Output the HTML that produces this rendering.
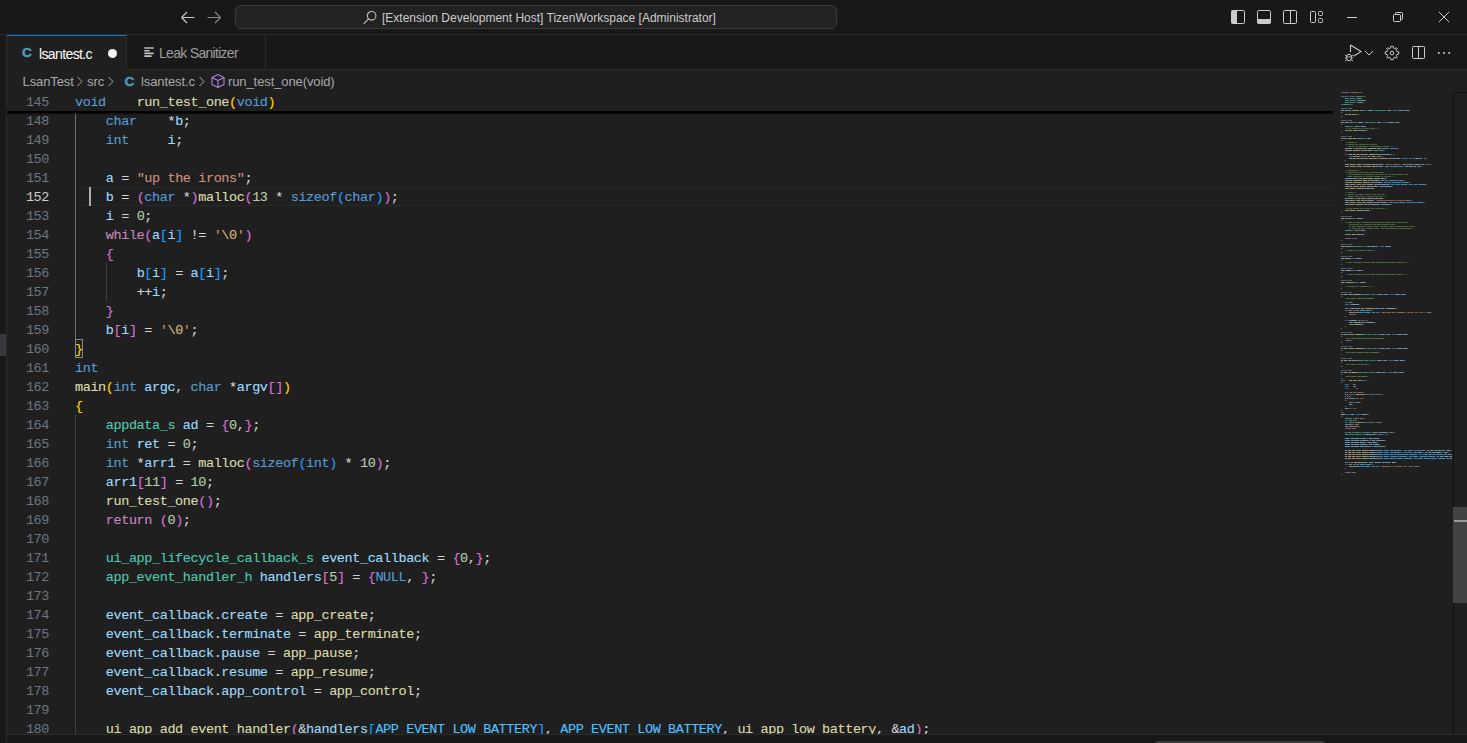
<!DOCTYPE html>
<html><head><meta charset="utf-8">
<style>
*{margin:0;padding:0;box-sizing:border-box}
html,body{width:1467px;height:743px;overflow:hidden;background:#1f1f1f;font-family:"Liberation Sans",sans-serif;position:relative}
.abs{position:absolute}
#title{position:absolute;left:0;top:0;width:1467px;height:35px;background:#181818;border-bottom:1px solid #2b2b2b}
#search{position:absolute;left:235px;top:5px;width:602px;height:24px;background:#222222;border:1px solid #3b3b3b;border-radius:6px}
#search .t{position:absolute;left:146px;top:5px;font-size:12px;color:#cccccc;white-space:pre;letter-spacing:0px}
#lstrip{position:absolute;left:0;top:35px;width:7px;height:708px;background:#181818;border-right:1px solid #2b2b2b}
#tabs{position:absolute;left:7px;top:35px;width:1460px;height:35px;background:#181818;border-bottom:1px solid #2b2b2b}
.tab{position:absolute;top:0;height:35px;border-right:1px solid #2b2b2b;font-size:13px;white-space:pre}
#tab1{left:0;width:120px;background:#1f1f1f;border-top:1px solid #0078d4}
#tab2{left:120px;width:139px;height:34px;background:#181818}
#bc{position:absolute;left:7px;top:70px;width:1460px;height:22px;background:#1f1f1f;font-size:13px;color:#a9a9a9;white-space:pre}
#bc span{position:absolute;top:4px;letter-spacing:-0.1px}
#editor{position:absolute;left:7px;top:92px;width:1460px;height:642px;overflow:hidden;background:#1f1f1f}
.ln{position:absolute;left:0;width:42px;height:19px;margin-top:1px;text-align:right;font-family:"Liberation Mono",monospace;font-size:13.5px;line-height:19px;color:#6e7681;letter-spacing:-0.4px}
.ln.act{color:#cccccc}
.cl{position:absolute;left:68px;height:19px;margin-top:1px;font-family:"Liberation Mono",monospace;font-size:13.5px;line-height:19px;white-space:pre;color:#d4d4d4;letter-spacing:-0.4px;-webkit-text-stroke:0.12px currentColor}
.g{position:absolute;width:1px;background:#404040}
.g.ga{background:#707070}
.sticky{position:absolute;left:0;top:0;width:1326px;height:19px;background:#1f1f1f}
.stsh{position:absolute;left:0;top:19px;width:1326px;height:4px;background:linear-gradient(to bottom,#000 0,#000 40%,rgba(0,0,0,0.35) 70%,rgba(0,0,0,0) 100%)}
.mmwrap{position:absolute;left:1334px;top:92px;width:118px;height:642px;overflow:hidden}
.mm{position:absolute;left:7px;top:0;font-family:"Liberation Mono",monospace;font-size:10px;line-height:12px;white-space:pre;transform:scale(0.16667);transform-origin:0 0;font-weight:bold;-webkit-text-stroke:0.5px currentColor}
.mm i{font-style:normal}
#bottom{position:absolute;left:7px;top:734px;width:1460px;height:9px;background:#181818;border-top:1px solid #2b2b2b}
svg{display:block}
</style></head><body>

<div id="title">
  <svg class="abs" style="left:179px;top:10px" width="18" height="16" viewBox="0 0 18 16"><path d="M2.5 7.5 H15.5 M2.5 7.5 L8 2 M2.5 7.5 L8 13" stroke="#cccccc" stroke-width="1.1" fill="none"/></svg>
  <svg class="abs" style="left:205px;top:10px" width="18" height="16" viewBox="0 0 18 16"><path d="M2.5 7.5 H15.5 M15.5 7.5 L10 2 M15.5 7.5 L10 13" stroke="#8a8a8a" stroke-width="1.1" fill="none"/></svg>
  <div id="search">
    <svg class="abs" style="left:126px;top:4px" width="16" height="16" viewBox="0 0 16 16"><circle cx="9.6" cy="5.8" r="4.3" stroke="#bdbdbd" stroke-width="1.1" fill="none"/><path d="M6.6 8.8 L1.6 13.8" stroke="#bdbdbd" stroke-width="1.2"/></svg>
    <div class="t">[Extension Development Host] TizenWorkspace [Administrator]</div>
  </div>
  <!-- layout icons -->
  <svg class="abs" style="left:1230px;top:9px" width="16" height="16" viewBox="0 0 16 16"><rect x="1.5" y="1.5" width="13" height="13" rx="1.2" stroke="#cccccc" stroke-width="1" fill="none"/><rect x="1.5" y="1.5" width="5.5" height="13" fill="#cccccc"/></svg>
  <svg class="abs" style="left:1256px;top:9px" width="16" height="16" viewBox="0 0 16 16"><rect x="1.5" y="1.5" width="13" height="13" rx="1.2" stroke="#cccccc" stroke-width="1" fill="none"/><rect x="1.5" y="10" width="13" height="4.5" fill="#cccccc"/></svg>
  <svg class="abs" style="left:1282px;top:9px" width="16" height="16" viewBox="0 0 16 16"><rect x="1.5" y="1.5" width="13" height="13" rx="1.2" stroke="#cccccc" stroke-width="1" fill="none"/><path d="M8.5 1.5 V14.5" stroke="#cccccc" stroke-width="1"/></svg>
  <svg class="abs" style="left:1309px;top:9px" width="16" height="16" viewBox="0 0 16 16"><rect x="1.5" y="2.5" width="5" height="11" rx="1" stroke="#cccccc" stroke-width="1" fill="none"/><rect x="9.5" y="2.5" width="4" height="4" rx="1" stroke="#cccccc" stroke-width="1" fill="none"/><rect x="9.5" y="9.5" width="4" height="4" rx="1" stroke="#cccccc" stroke-width="1" fill="none"/></svg>
  <!-- window controls -->
  <div class="abs" style="left:1347px;top:17px;width:10px;height:1px;background:#cccccc"></div>
  <svg class="abs" style="left:1392px;top:11px" width="12" height="12" viewBox="0 0 12 12"><rect x="1.5" y="3.5" width="7" height="7" stroke="#cccccc" stroke-width="1" fill="none" rx="0.8"/><path d="M3.5 3.5 V2.3 Q3.5 1.5 4.3 1.5 H9.7 Q10.5 1.5 10.5 2.3 V7.7 Q10.5 8.5 9.7 8.5 H8.5" stroke="#cccccc" stroke-width="1" fill="none"/></svg>
  <svg class="abs" style="left:1438px;top:11px" width="12" height="12" viewBox="0 0 12 12"><path d="M0.8 0.8 L11.2 11.2 M11.2 0.8 L0.8 11.2" stroke="#cccccc" stroke-width="1" fill="none"/></svg>
</div>

<div id="lstrip"><div class="abs" style="left:0;top:299px;width:6px;height:22px;background:#37373d"></div></div>

<div id="tabs">
  <div class="tab" id="tab1">
    <div class="abs" style="left:15px;top:9px;font-size:13.6px;font-weight:bold;color:#519aba;-webkit-text-stroke:0.5px #519aba">C</div>
    <div class="abs" style="left:32px;top:9.5px;font-size:14px;letter-spacing:-0.62px;color:#ffffff">lsantest.c</div>
    <div class="abs" style="left:101px;top:13px;width:9px;height:9px;border-radius:50%;background:#f4f4f4"></div>
  </div>
  <div class="tab" id="tab2">
    <svg class="abs" style="left:16px;top:11px" width="12" height="12" viewBox="0 0 12 12"><path d="M1.3 2 H10.7 M1.3 4.7 H6.6 M1.3 7.4 H10.7 M1.3 10.1 H8.7" stroke="#c0c0c0" stroke-width="1.6"/></svg>
    <div class="abs" style="left:32px;top:9.8px;font-size:14px;letter-spacing:-0.7px;color:#9d9d9d">Leak Sanitizer</div>
  </div>
  <!-- editor actions -->
  <svg class="abs" style="left:1336px;top:8px" width="24" height="20" viewBox="0 0 24 20"><path d="M7.5 2 L18 8.6 L10.5 13.2" stroke="#cccccc" stroke-width="1.1" fill="none" stroke-linejoin="miter"/><path d="M7.5 2 V9" stroke="#cccccc" stroke-width="1.1"/><ellipse cx="6" cy="14.5" rx="2.6" ry="3.2" stroke="#cccccc" stroke-width="1" fill="none"/><path d="M2 12 L3.6 13 M2 15 H3.4 M2 18 L3.6 17 M10 12 L8.4 13 M10 15 H8.6 M10 18 L8.4 17 M3.5 14 H8.5" stroke="#cccccc" stroke-width="0.9"/></svg>
  <svg class="abs" style="left:1357px;top:14px" width="10" height="8" viewBox="0 0 10 8"><path d="M1 2 L5 6 L9 2" stroke="#cccccc" stroke-width="1" fill="none"/></svg>
  <svg class="abs" style="left:1377px;top:10px" width="16" height="16" viewBox="0 0 16 16"><path d="M8 1.2 L9.2 1.4 L9.5 3.1 L10.8 3.7 L12.3 2.8 L13.2 3.7 L12.3 5.2 L12.9 6.5 L14.6 6.8 L14.8 8 L14.6 9.2 L12.9 9.5 L12.3 10.8 L13.2 12.3 L12.3 13.2 L10.8 12.3 L9.5 12.9 L9.2 14.6 L8 14.8 L6.8 14.6 L6.5 12.9 L5.2 12.3 L3.7 13.2 L2.8 12.3 L3.7 10.8 L3.1 9.5 L1.4 9.2 L1.2 8 L1.4 6.8 L3.1 6.5 L3.7 5.2 L2.8 3.7 L3.7 2.8 L5.2 3.7 L6.5 3.1 L6.8 1.4 Z" stroke="#cccccc" stroke-width="1" fill="none"/><circle cx="8" cy="8" r="1.8" stroke="#cccccc" stroke-width="1" fill="none"/></svg>
  <svg class="abs" style="left:1404px;top:10px" width="16" height="16" viewBox="0 0 16 16"><rect x="1.5" y="1.5" width="12" height="12" rx="0.8" stroke="#cccccc" stroke-width="1" fill="none"/><path d="M7.5 1.5 V14" stroke="#cccccc" stroke-width="1"/></svg>
  <svg class="abs" style="left:1429px;top:10px" width="16" height="16" viewBox="0 0 16 16"><circle cx="2.8" cy="8" r="1" fill="#cccccc"/><circle cx="8" cy="8" r="1" fill="#cccccc"/><circle cx="13.2" cy="8" r="1" fill="#cccccc"/></svg>
</div>

<div id="bc">
  <span style="left:15.5px">LsanTest</span>
  <svg class="abs" style="left:68.5px;top:6px" width="8" height="12" viewBox="0 0 8 12"><path d="M1.5 1 L6 5.5 L1.5 10" stroke="#a9a9a9" stroke-width="1" fill="none"/></svg>
  <span style="left:80px">src</span>
  <svg class="abs" style="left:100px;top:6px" width="8" height="12" viewBox="0 0 8 12"><path d="M1.5 1 L6 5.5 L1.5 10" stroke="#a9a9a9" stroke-width="1" fill="none"/></svg>
  <span style="left:117.5px;top:3.5px;font-size:13.6px;font-weight:bold;color:#519aba;-webkit-text-stroke:0.5px #519aba">C</span>
  <span style="left:134px">lsantest.c</span>
  <svg class="abs" style="left:191px;top:6px" width="8" height="12" viewBox="0 0 8 12"><path d="M1.5 1 L6 5.5 L1.5 10" stroke="#a9a9a9" stroke-width="1" fill="none"/></svg>
  <svg class="abs" style="left:203px;top:3px" width="16" height="16" viewBox="0 0 16 16"><path d="M8 1.5 L14 4.5 V11.5 L8 14.5 L2 11.5 V4.5 Z M2 4.5 L8 7.5 L14 4.5 M8 7.5 V14.5" stroke="#b180d7" stroke-width="1.1" fill="none" stroke-linejoin="round"/></svg>
  <span style="left:221px">run_test_one(void)</span>
</div>

<div id="editor">
  <!-- current line highlight -->
  <div class="abs" style="left:68px;top:95px;width:1259px;height:19px;border-top:1px solid #282828;border-bottom:1px solid #282828"></div>
  <div class="g ga" style="left:68px;top:19px;height:228px"></div><div class="g" style="left:99px;top:171px;height:38px"></div><div class="g" style="left:68px;top:323px;height:323px"></div>
  <!-- cursor -->
  <div class="abs" style="left:82px;top:95px;width:2px;height:19px;background:#aeafad"></div>
  <!-- bracket match box on line 160 -->
  <div class="abs" style="left:68px;top:247px;width:8px;height:19px;border:1px solid #888888;background:rgba(0,100,0,0.1)"></div>
  <div class="ln" style="top:19px">148</div>
<div class="cl" style="top:19px">    <span style="color:#569cd6">char</span>    <span style="color:#d4d4d4">*</span><span style="color:#9cdcfe">b</span><span style="color:#d4d4d4">;</span></div>
<div class="ln" style="top:38px">149</div>
<div class="cl" style="top:38px">    <span style="color:#569cd6">int</span>     <span style="color:#9cdcfe">i</span><span style="color:#d4d4d4">;</span></div>
<div class="ln" style="top:57px">150</div>
<div class="cl" style="top:57px"></div>
<div class="ln" style="top:76px">151</div>
<div class="cl" style="top:76px">    <span style="color:#9cdcfe">a</span><span style="color:#d4d4d4"> = </span><span style="color:#ce9178">"up the irons"</span><span style="color:#d4d4d4">;</span></div>
<div class="ln act" style="top:95px">152</div>
<div class="cl" style="top:95px">    <span style="color:#9cdcfe">b</span><span style="color:#d4d4d4"> = </span><span style="color:#da70d6">(</span><span style="color:#569cd6">char</span><span style="color:#d4d4d4"> *</span><span style="color:#da70d6">)</span><span style="color:#dcdcaa">malloc</span><span style="color:#da70d6">(</span><span style="color:#b5cea8">13</span><span style="color:#d4d4d4"> * </span><span style="color:#569cd6">sizeof</span><span style="color:#179fff">(</span><span style="color:#569cd6">char</span><span style="color:#179fff">)</span><span style="color:#da70d6">)</span><span style="color:#d4d4d4">;</span></div>
<div class="ln" style="top:114px">153</div>
<div class="cl" style="top:114px">    <span style="color:#9cdcfe">i</span><span style="color:#d4d4d4"> = </span><span style="color:#b5cea8">0</span><span style="color:#d4d4d4">;</span></div>
<div class="ln" style="top:133px">154</div>
<div class="cl" style="top:133px">    <span style="color:#c586c0">while</span><span style="color:#da70d6">(</span><span style="color:#9cdcfe">a</span><span style="color:#179fff">[</span><span style="color:#9cdcfe">i</span><span style="color:#179fff">]</span><span style="color:#d4d4d4"> != </span><span style="color:#ce9178">'</span><span style="color:#d7ba7d">\0</span><span style="color:#ce9178">'</span><span style="color:#da70d6">)</span></div>
<div class="ln" style="top:152px">155</div>
<div class="cl" style="top:152px">    <span style="color:#da70d6">{</span></div>
<div class="ln" style="top:171px">156</div>
<div class="cl" style="top:171px">        <span style="color:#9cdcfe">b</span><span style="color:#179fff">[</span><span style="color:#9cdcfe">i</span><span style="color:#179fff">]</span><span style="color:#d4d4d4"> = </span><span style="color:#9cdcfe">a</span><span style="color:#179fff">[</span><span style="color:#9cdcfe">i</span><span style="color:#179fff">]</span><span style="color:#d4d4d4">;</span></div>
<div class="ln" style="top:190px">157</div>
<div class="cl" style="top:190px">        <span style="color:#d4d4d4">++</span><span style="color:#9cdcfe">i</span><span style="color:#d4d4d4">;</span></div>
<div class="ln" style="top:209px">158</div>
<div class="cl" style="top:209px">    <span style="color:#da70d6">}</span></div>
<div class="ln" style="top:228px">159</div>
<div class="cl" style="top:228px">    <span style="color:#9cdcfe">b</span><span style="color:#da70d6">[</span><span style="color:#9cdcfe">i</span><span style="color:#da70d6">]</span><span style="color:#d4d4d4"> = </span><span style="color:#ce9178">'</span><span style="color:#d7ba7d">\0</span><span style="color:#ce9178">'</span><span style="color:#d4d4d4">;</span></div>
<div class="ln" style="top:247px">160</div>
<div class="cl" style="top:247px"><span style="color:#ffd700">}</span></div>
<div class="ln" style="top:266px">161</div>
<div class="cl" style="top:266px"><span style="color:#569cd6">int</span></div>
<div class="ln" style="top:285px">162</div>
<div class="cl" style="top:285px"><span style="color:#dcdcaa">main</span><span style="color:#ffd700">(</span><span style="color:#569cd6">int</span> <span style="color:#9cdcfe">argc</span><span style="color:#d4d4d4">, </span><span style="color:#569cd6">char</span><span style="color:#d4d4d4"> *</span><span style="color:#9cdcfe">argv</span><span style="color:#da70d6">[</span><span style="color:#da70d6">]</span><span style="color:#ffd700">)</span></div>
<div class="ln" style="top:304px">163</div>
<div class="cl" style="top:304px"><span style="color:#ffd700">{</span></div>
<div class="ln" style="top:323px">164</div>
<div class="cl" style="top:323px">    <span style="color:#4ec9b0">appdata_s</span> <span style="color:#9cdcfe">ad</span><span style="color:#d4d4d4"> = </span><span style="color:#da70d6">{</span><span style="color:#b5cea8">0</span><span style="color:#d4d4d4">,</span><span style="color:#da70d6">}</span><span style="color:#d4d4d4">;</span></div>
<div class="ln" style="top:342px">165</div>
<div class="cl" style="top:342px">    <span style="color:#569cd6">int</span> <span style="color:#9cdcfe">ret</span><span style="color:#d4d4d4"> = </span><span style="color:#b5cea8">0</span><span style="color:#d4d4d4">;</span></div>
<div class="ln" style="top:361px">166</div>
<div class="cl" style="top:361px">    <span style="color:#569cd6">int</span><span style="color:#d4d4d4"> *</span><span style="color:#9cdcfe">arr1</span><span style="color:#d4d4d4"> = </span><span style="color:#dcdcaa">malloc</span><span style="color:#da70d6">(</span><span style="color:#569cd6">sizeof</span><span style="color:#179fff">(</span><span style="color:#569cd6">int</span><span style="color:#179fff">)</span><span style="color:#d4d4d4"> * </span><span style="color:#b5cea8">10</span><span style="color:#da70d6">)</span><span style="color:#d4d4d4">;</span></div>
<div class="ln" style="top:380px">167</div>
<div class="cl" style="top:380px">    <span style="color:#9cdcfe">arr1</span><span style="color:#da70d6">[</span><span style="color:#b5cea8">11</span><span style="color:#da70d6">]</span><span style="color:#d4d4d4"> = </span><span style="color:#b5cea8">10</span><span style="color:#d4d4d4">;</span></div>
<div class="ln" style="top:399px">168</div>
<div class="cl" style="top:399px">    <span style="color:#dcdcaa">run_test_one</span><span style="color:#da70d6">(</span><span style="color:#da70d6">)</span><span style="color:#d4d4d4">;</span></div>
<div class="ln" style="top:418px">169</div>
<div class="cl" style="top:418px">    <span style="color:#c586c0">return</span> <span style="color:#da70d6">(</span><span style="color:#b5cea8">0</span><span style="color:#da70d6">)</span><span style="color:#d4d4d4">;</span></div>
<div class="ln" style="top:437px">170</div>
<div class="cl" style="top:437px"></div>
<div class="ln" style="top:456px">171</div>
<div class="cl" style="top:456px">    <span style="color:#4ec9b0">ui_app_lifecycle_callback_s</span> <span style="color:#9cdcfe">event_callback</span><span style="color:#d4d4d4"> = </span><span style="color:#da70d6">{</span><span style="color:#b5cea8">0</span><span style="color:#d4d4d4">,</span><span style="color:#da70d6">}</span><span style="color:#d4d4d4">;</span></div>
<div class="ln" style="top:475px">172</div>
<div class="cl" style="top:475px">    <span style="color:#4ec9b0">app_event_handler_h</span> <span style="color:#9cdcfe">handlers</span><span style="color:#da70d6">[</span><span style="color:#b5cea8">5</span><span style="color:#da70d6">]</span><span style="color:#d4d4d4"> = </span><span style="color:#da70d6">{</span><span style="color:#569cd6">NULL</span><span style="color:#d4d4d4">, </span><span style="color:#da70d6">}</span><span style="color:#d4d4d4">;</span></div>
<div class="ln" style="top:494px">173</div>
<div class="cl" style="top:494px"></div>
<div class="ln" style="top:513px">174</div>
<div class="cl" style="top:513px">    <span style="color:#9cdcfe">event_callback</span><span style="color:#d4d4d4">.</span><span style="color:#9cdcfe">create</span><span style="color:#d4d4d4"> = </span><span style="color:#dcdcaa">app_create</span><span style="color:#d4d4d4">;</span></div>
<div class="ln" style="top:532px">175</div>
<div class="cl" style="top:532px">    <span style="color:#9cdcfe">event_callback</span><span style="color:#d4d4d4">.</span><span style="color:#9cdcfe">terminate</span><span style="color:#d4d4d4"> = </span><span style="color:#dcdcaa">app_terminate</span><span style="color:#d4d4d4">;</span></div>
<div class="ln" style="top:551px">176</div>
<div class="cl" style="top:551px">    <span style="color:#9cdcfe">event_callback</span><span style="color:#d4d4d4">.</span><span style="color:#9cdcfe">pause</span><span style="color:#d4d4d4"> = </span><span style="color:#dcdcaa">app_pause</span><span style="color:#d4d4d4">;</span></div>
<div class="ln" style="top:570px">177</div>
<div class="cl" style="top:570px">    <span style="color:#9cdcfe">event_callback</span><span style="color:#d4d4d4">.</span><span style="color:#9cdcfe">resume</span><span style="color:#d4d4d4"> = </span><span style="color:#dcdcaa">app_resume</span><span style="color:#d4d4d4">;</span></div>
<div class="ln" style="top:589px">178</div>
<div class="cl" style="top:589px">    <span style="color:#9cdcfe">event_callback</span><span style="color:#d4d4d4">.</span><span style="color:#9cdcfe">app_control</span><span style="color:#d4d4d4"> = </span><span style="color:#dcdcaa">app_control</span><span style="color:#d4d4d4">;</span></div>
<div class="ln" style="top:608px">179</div>
<div class="cl" style="top:608px"></div>
<div class="ln" style="top:627px">180</div>
<div class="cl" style="top:627px">    <span style="color:#dcdcaa">ui_app_add_event_handler</span><span style="color:#da70d6">(</span><span style="color:#d4d4d4">&amp;</span><span style="color:#9cdcfe">handlers</span><span style="color:#179fff">[</span><span style="color:#4fc1ff">APP_EVENT_LOW_BATTERY</span><span style="color:#179fff">]</span><span style="color:#d4d4d4">, </span><span style="color:#4fc1ff">APP_EVENT_LOW_BATTERY</span><span style="color:#d4d4d4">, </span><span style="color:#dcdcaa">ui_app_low_battery</span><span style="color:#d4d4d4">, </span><span style="color:#d4d4d4">&amp;</span><span style="color:#9cdcfe">ad</span><span style="color:#da70d6">)</span><span style="color:#d4d4d4">;</span></div>
  <div class="stsh"></div><div class="sticky"><div class="ln" style="top:0">145</div><div class="cl" style="top:0"><span style="color:#569cd6">void</span>    <span style="color:#dcdcaa">run_test_one</span><span style="color:#ffd700">(</span><span style="color:#569cd6">void</span><span style="color:#ffd700">)</span></div></div>
</div>
<div class="mmwrap"><div class="mm"><i style="color:#c586c0">#include</i> <i style="color:#ce9178">"lsantest.h"</i>

<i style="color:#569cd6">typedef</i> <i style="color:#569cd6">struct</i> <i style="color:#4ec9b0">appdata</i> <i style="color:#d4d4d4">{</i>
    <i style="color:#4ec9b0">Evas_Object</i> <i style="color:#d4d4d4">*</i><i style="color:#9cdcfe">win</i><i style="color:#d4d4d4">;</i>
    <i style="color:#4ec9b0">Evas_Object</i> <i style="color:#d4d4d4">*</i><i style="color:#9cdcfe">conform</i><i style="color:#d4d4d4">;</i>
    <i style="color:#4ec9b0">Evas_Object</i> <i style="color:#d4d4d4">*</i><i style="color:#9cdcfe">label</i><i style="color:#d4d4d4">;</i>
<i style="color:#d4d4d4">}</i> <i style="color:#4ec9b0">appdata_s</i><i style="color:#d4d4d4">;</i>

<i style="color:#569cd6">static</i> <i style="color:#569cd6">void</i>
<i style="color:#dcdcaa">win_delete_request_cb</i><i style="color:#d4d4d4">(</i><i style="color:#569cd6">void</i> <i style="color:#d4d4d4">*</i><i style="color:#9cdcfe">data</i><i style="color:#d4d4d4">,</i> <i style="color:#4ec9b0">Evas_Object</i> <i style="color:#d4d4d4">*</i><i style="color:#9cdcfe">obj</i><i style="color:#d4d4d4">,</i> <i style="color:#569cd6">void</i> <i style="color:#d4d4d4">*</i><i style="color:#9cdcfe">event_info</i><i style="color:#d4d4d4">)</i>
<i style="color:#d4d4d4">{</i>
    <i style="color:#dcdcaa">ui_app_exit</i><i style="color:#d4d4d4">(</i><i style="color:#d4d4d4">)</i><i style="color:#d4d4d4">;</i>
<i style="color:#d4d4d4">}</i>

<i style="color:#569cd6">static</i> <i style="color:#569cd6">void</i>
<i style="color:#dcdcaa">win_back_cb</i><i style="color:#d4d4d4">(</i><i style="color:#569cd6">void</i> <i style="color:#d4d4d4">*</i><i style="color:#9cdcfe">data</i><i style="color:#d4d4d4">,</i> <i style="color:#4ec9b0">Evas_Object</i> <i style="color:#d4d4d4">*</i><i style="color:#9cdcfe">obj</i><i style="color:#d4d4d4">,</i> <i style="color:#569cd6">void</i> <i style="color:#d4d4d4">*</i><i style="color:#9cdcfe">event_info</i><i style="color:#d4d4d4">)</i>
<i style="color:#d4d4d4">{</i>
    <i style="color:#4ec9b0">appdata_s</i> <i style="color:#d4d4d4">*</i><i style="color:#9cdcfe">ad</i> <i style="color:#d4d4d4">=</i> <i style="color:#9cdcfe">data</i><i style="color:#d4d4d4">;</i>
    <i style="color:#6a9955">/* Let window go to hide state. */</i>
    <i style="color:#dcdcaa">elm_win_lower</i><i style="color:#d4d4d4">(</i><i style="color:#9cdcfe">ad</i><i style="color:#d4d4d4">-</i><i style="color:#d4d4d4">&gt;</i><i style="color:#9cdcfe">win</i><i style="color:#d4d4d4">)</i><i style="color:#d4d4d4">;</i>
<i style="color:#d4d4d4">}</i>

<i style="color:#569cd6">static</i> <i style="color:#569cd6">void</i>
<i style="color:#dcdcaa">create_base_gui</i><i style="color:#d4d4d4">(</i><i style="color:#4ec9b0">appdata_s</i> <i style="color:#d4d4d4">*</i><i style="color:#9cdcfe">ad</i><i style="color:#d4d4d4">)</i>
<i style="color:#d4d4d4">{</i>
    <i style="color:#6a9955">/* Window */</i>
    <i style="color:#6a9955">/* Create and initialize elm_win.</i>
       <i style="color:#6a9955">elm_win is mandatory to manipulate window. */</i>
    <i style="color:#9cdcfe">ad</i><i style="color:#d4d4d4">-</i><i style="color:#d4d4d4">&gt;</i><i style="color:#9cdcfe">win</i> <i style="color:#d4d4d4">=</i> <i style="color:#dcdcaa">elm_win_util_standard_add</i><i style="color:#d4d4d4">(</i><i style="color:#4fc1ff">PACKAGE</i><i style="color:#d4d4d4">,</i> <i style="color:#4fc1ff">PACKAGE</i><i style="color:#d4d4d4">)</i><i style="color:#d4d4d4">;</i>
    <i style="color:#dcdcaa">elm_win_autodel_set</i><i style="color:#d4d4d4">(</i><i style="color:#9cdcfe">ad</i><i style="color:#d4d4d4">-</i><i style="color:#d4d4d4">&gt;</i><i style="color:#9cdcfe">win</i><i style="color:#d4d4d4">,</i> <i style="color:#4fc1ff">EINA_TRUE</i><i style="color:#d4d4d4">)</i><i style="color:#d4d4d4">;</i>

    <i style="color:#c586c0">if</i> <i style="color:#d4d4d4">(</i><i style="color:#dcdcaa">elm_win_wm_rotation_supported_get</i><i style="color:#d4d4d4">(</i><i style="color:#9cdcfe">ad</i><i style="color:#d4d4d4">-</i><i style="color:#d4d4d4">&gt;</i><i style="color:#9cdcfe">win</i><i style="color:#d4d4d4">)</i><i style="color:#d4d4d4">)</i> <i style="color:#d4d4d4">{</i>
        <i style="color:#569cd6">int</i> <i style="color:#9cdcfe">rots</i><i style="color:#d4d4d4">[</i><i style="color:#b5cea8">4</i><i style="color:#d4d4d4">]</i> <i style="color:#d4d4d4">=</i> <i style="color:#d4d4d4">{</i> <i style="color:#b5cea8">0</i><i style="color:#d4d4d4">,</i> <i style="color:#b5cea8">90</i><i style="color:#d4d4d4">,</i> <i style="color:#b5cea8">180</i><i style="color:#d4d4d4">,</i> <i style="color:#b5cea8">270</i> <i style="color:#d4d4d4">}</i><i style="color:#d4d4d4">;</i>
        <i style="color:#dcdcaa">elm_win_wm_rotation_available_rotations_set</i><i style="color:#d4d4d4">(</i><i style="color:#9cdcfe">ad</i><i style="color:#d4d4d4">-</i><i style="color:#d4d4d4">&gt;</i><i style="color:#9cdcfe">win</i><i style="color:#d4d4d4">,</i> <i style="color:#d4d4d4">(</i><i style="color:#569cd6">const</i> <i style="color:#569cd6">int</i> <i style="color:#d4d4d4">*</i><i style="color:#d4d4d4">)</i><i style="color:#d4d4d4">(</i><i style="color:#d4d4d4">&amp;</i><i style="color:#9cdcfe">rots</i><i style="color:#d4d4d4">)</i><i style="color:#d4d4d4">,</i> <i style="color:#b5cea8">4</i><i style="color:#d4d4d4">)</i><i style="color:#d4d4d4">;</i>
    <i style="color:#d4d4d4">}</i>

    <i style="color:#dcdcaa">evas_object_smart_callback_add</i><i style="color:#d4d4d4">(</i><i style="color:#9cdcfe">ad</i><i style="color:#d4d4d4">-</i><i style="color:#d4d4d4">&gt;</i><i style="color:#9cdcfe">win</i><i style="color:#d4d4d4">,</i> <i style="color:#ce9178">"delete,request"</i><i style="color:#d4d4d4">,</i> <i style="color:#9cdcfe">win_delete_request_cb</i><i style="color:#d4d4d4">,</i> <i style="color:#569cd6">NULL</i><i style="color:#d4d4d4">)</i><i style="color:#d4d4d4">;</i>
    <i style="color:#dcdcaa">eext_object_event_callback_add</i><i style="color:#d4d4d4">(</i><i style="color:#9cdcfe">ad</i><i style="color:#d4d4d4">-</i><i style="color:#d4d4d4">&gt;</i><i style="color:#9cdcfe">win</i><i style="color:#d4d4d4">,</i> <i style="color:#4fc1ff">EEXT_CALLBACK_BACK</i><i style="color:#d4d4d4">,</i> <i style="color:#9cdcfe">win_back_cb</i><i style="color:#d4d4d4">,</i> <i style="color:#9cdcfe">ad</i><i style="color:#d4d4d4">)</i><i style="color:#d4d4d4">;</i>

    <i style="color:#6a9955">/* Conformant */</i>
    <i style="color:#6a9955">/* Create and initialize elm_conformant.</i>
       <i style="color:#6a9955">elm_conformant is mandatory for base gui to have proper size</i>
       <i style="color:#6a9955">when indicator or virtual keypad is visible. */</i>
    <i style="color:#9cdcfe">ad</i><i style="color:#d4d4d4">-</i><i style="color:#d4d4d4">&gt;</i><i style="color:#9cdcfe">conform</i> <i style="color:#d4d4d4">=</i> <i style="color:#dcdcaa">elm_conformant_add</i><i style="color:#d4d4d4">(</i><i style="color:#9cdcfe">ad</i><i style="color:#d4d4d4">-</i><i style="color:#d4d4d4">&gt;</i><i style="color:#9cdcfe">win</i><i style="color:#d4d4d4">)</i><i style="color:#d4d4d4">;</i>
    <i style="color:#dcdcaa">elm_win_indicator_mode_set</i><i style="color:#d4d4d4">(</i><i style="color:#9cdcfe">ad</i><i style="color:#d4d4d4">-</i><i style="color:#d4d4d4">&gt;</i><i style="color:#9cdcfe">win</i><i style="color:#d4d4d4">,</i> <i style="color:#4fc1ff">ELM_WIN_INDICATOR_SHOW</i><i style="color:#d4d4d4">)</i><i style="color:#d4d4d4">;</i>
    <i style="color:#dcdcaa">elm_win_indicator_opacity_set</i><i style="color:#d4d4d4">(</i><i style="color:#9cdcfe">ad</i><i style="color:#d4d4d4">-</i><i style="color:#d4d4d4">&gt;</i><i style="color:#9cdcfe">win</i><i style="color:#d4d4d4">,</i> <i style="color:#4fc1ff">ELM_WIN_INDICATOR_OPAQUE</i><i style="color:#d4d4d4">)</i><i style="color:#d4d4d4">;</i>
    <i style="color:#dcdcaa">evas_object_size_hint_weight_set</i><i style="color:#d4d4d4">(</i><i style="color:#9cdcfe">ad</i><i style="color:#d4d4d4">-</i><i style="color:#d4d4d4">&gt;</i><i style="color:#9cdcfe">conform</i><i style="color:#d4d4d4">,</i> <i style="color:#4fc1ff">EVAS_HINT_EXPAND</i><i style="color:#d4d4d4">,</i> <i style="color:#4fc1ff">EVAS_HINT_EXPAND</i><i style="color:#d4d4d4">)</i><i style="color:#d4d4d4">;</i>
    <i style="color:#dcdcaa">elm_win_resize_object_add</i><i style="color:#d4d4d4">(</i><i style="color:#9cdcfe">ad</i><i style="color:#d4d4d4">-</i><i style="color:#d4d4d4">&gt;</i><i style="color:#9cdcfe">win</i><i style="color:#d4d4d4">,</i> <i style="color:#9cdcfe">ad</i><i style="color:#d4d4d4">-</i><i style="color:#d4d4d4">&gt;</i><i style="color:#9cdcfe">conform</i><i style="color:#d4d4d4">)</i><i style="color:#d4d4d4">;</i>
    <i style="color:#dcdcaa">evas_object_show</i><i style="color:#d4d4d4">(</i><i style="color:#9cdcfe">ad</i><i style="color:#d4d4d4">-</i><i style="color:#d4d4d4">&gt;</i><i style="color:#9cdcfe">conform</i><i style="color:#d4d4d4">)</i><i style="color:#d4d4d4">;</i>

    <i style="color:#6a9955">/* Label */</i>
    <i style="color:#6a9955">/* Create an actual view of the base gui.</i>
       <i style="color:#6a9955">Modify this part to change the view. */</i>
    <i style="color:#9cdcfe">ad</i><i style="color:#d4d4d4">-</i><i style="color:#d4d4d4">&gt;</i><i style="color:#9cdcfe">label</i> <i style="color:#d4d4d4">=</i> <i style="color:#dcdcaa">elm_label_add</i><i style="color:#d4d4d4">(</i><i style="color:#9cdcfe">ad</i><i style="color:#d4d4d4">-</i><i style="color:#d4d4d4">&gt;</i><i style="color:#9cdcfe">conform</i><i style="color:#d4d4d4">)</i><i style="color:#d4d4d4">;</i>
    <i style="color:#dcdcaa">elm_object_text_set</i><i style="color:#d4d4d4">(</i><i style="color:#9cdcfe">ad</i><i style="color:#d4d4d4">-</i><i style="color:#d4d4d4">&gt;</i><i style="color:#9cdcfe">label</i><i style="color:#d4d4d4">,</i> <i style="color:#ce9178">"&lt;align=center&gt;Hello Tizen&lt;/align&gt;"</i><i style="color:#d4d4d4">)</i><i style="color:#d4d4d4">;</i>
    <i style="color:#dcdcaa">evas_object_size_hint_weight_set</i><i style="color:#d4d4d4">(</i><i style="color:#9cdcfe">ad</i><i style="color:#d4d4d4">-</i><i style="color:#d4d4d4">&gt;</i><i style="color:#9cdcfe">label</i><i style="color:#d4d4d4">,</i> <i style="color:#4fc1ff">EVAS_HINT_EXPAND</i><i style="color:#d4d4d4">,</i> <i style="color:#4fc1ff">EVAS_HINT_EXPAND</i><i style="color:#d4d4d4">)</i><i style="color:#d4d4d4">;</i>
    <i style="color:#dcdcaa">elm_object_content_set</i><i style="color:#d4d4d4">(</i><i style="color:#9cdcfe">ad</i><i style="color:#d4d4d4">-</i><i style="color:#d4d4d4">&gt;</i><i style="color:#9cdcfe">conform</i><i style="color:#d4d4d4">,</i> <i style="color:#9cdcfe">ad</i><i style="color:#d4d4d4">-</i><i style="color:#d4d4d4">&gt;</i><i style="color:#9cdcfe">label</i><i style="color:#d4d4d4">)</i><i style="color:#d4d4d4">;</i>

    <i style="color:#6a9955">/* Show window after base gui is set up */</i>
    <i style="color:#dcdcaa">evas_object_show</i><i style="color:#d4d4d4">(</i><i style="color:#9cdcfe">ad</i><i style="color:#d4d4d4">-</i><i style="color:#d4d4d4">&gt;</i><i style="color:#9cdcfe">win</i><i style="color:#d4d4d4">)</i><i style="color:#d4d4d4">;</i>
<i style="color:#d4d4d4">}</i>

<i style="color:#569cd6">static</i> <i style="color:#569cd6">bool</i>
<i style="color:#dcdcaa">app_create</i><i style="color:#d4d4d4">(</i><i style="color:#569cd6">void</i> <i style="color:#d4d4d4">*</i><i style="color:#9cdcfe">data</i><i style="color:#d4d4d4">)</i>
<i style="color:#d4d4d4">{</i>
    <i style="color:#6a9955">/* Hook to take necessary actions before main event loop starts</i>
        <i style="color:#6a9955">Initialize UI resources and application's data</i>
        <i style="color:#6a9955">If this function returns true, the main loop of application starts</i>
        <i style="color:#6a9955">If this function returns false, the application is terminated */</i>
    <i style="color:#4ec9b0">appdata_s</i> <i style="color:#d4d4d4">*</i><i style="color:#9cdcfe">ad</i> <i style="color:#d4d4d4">=</i> <i style="color:#9cdcfe">data</i><i style="color:#d4d4d4">;</i>

    <i style="color:#dcdcaa">create_base_gui</i><i style="color:#d4d4d4">(</i><i style="color:#9cdcfe">ad</i><i style="color:#d4d4d4">)</i><i style="color:#d4d4d4">;</i>

    <i style="color:#c586c0">return</i> <i style="color:#569cd6">true</i><i style="color:#d4d4d4">;</i>
<i style="color:#d4d4d4">}</i>

<i style="color:#569cd6">static</i> <i style="color:#569cd6">void</i>
<i style="color:#dcdcaa">app_control</i><i style="color:#d4d4d4">(</i><i style="color:#4ec9b0">app_control_h</i> <i style="color:#9cdcfe">app_control</i><i style="color:#d4d4d4">,</i> <i style="color:#569cd6">void</i> <i style="color:#d4d4d4">*</i><i style="color:#9cdcfe">data</i><i style="color:#d4d4d4">)</i>
<i style="color:#d4d4d4">{</i>
    <i style="color:#6a9955">/* Handle the launch request. */</i>
<i style="color:#d4d4d4">}</i>

<i style="color:#569cd6">static</i> <i style="color:#569cd6">void</i>
<i style="color:#dcdcaa">app_pause</i><i style="color:#d4d4d4">(</i><i style="color:#569cd6">void</i> <i style="color:#d4d4d4">*</i><i style="color:#9cdcfe">data</i><i style="color:#d4d4d4">)</i>
<i style="color:#d4d4d4">{</i>
    <i style="color:#6a9955">/* Take necessary actions when application becomes invisible. */</i>
<i style="color:#d4d4d4">}</i>

<i style="color:#569cd6">static</i> <i style="color:#569cd6">void</i>
<i style="color:#dcdcaa">app_resume</i><i style="color:#d4d4d4">(</i><i style="color:#569cd6">void</i> <i style="color:#d4d4d4">*</i><i style="color:#9cdcfe">data</i><i style="color:#d4d4d4">)</i>
<i style="color:#d4d4d4">{</i>
    <i style="color:#6a9955">/* Take necessary actions when application becomes visible. */</i>
<i style="color:#d4d4d4">}</i>

<i style="color:#569cd6">static</i> <i style="color:#569cd6">void</i>
<i style="color:#dcdcaa">app_terminate</i><i style="color:#d4d4d4">(</i><i style="color:#569cd6">void</i> <i style="color:#d4d4d4">*</i><i style="color:#9cdcfe">data</i><i style="color:#d4d4d4">)</i>
<i style="color:#d4d4d4">{</i>
    <i style="color:#6a9955">/* Release all resources. */</i>
<i style="color:#d4d4d4">}</i>

<i style="color:#569cd6">static</i> <i style="color:#569cd6">void</i>
<i style="color:#dcdcaa">ui_app_lang_changed</i><i style="color:#d4d4d4">(</i><i style="color:#4ec9b0">app_event_info_h</i> <i style="color:#9cdcfe">event_info</i><i style="color:#d4d4d4">,</i> <i style="color:#569cd6">void</i> <i style="color:#d4d4d4">*</i><i style="color:#9cdcfe">user_data</i><i style="color:#d4d4d4">)</i>
<i style="color:#d4d4d4">{</i>
    <i style="color:#6a9955">/*APP_EVENT_LANGUAGE_CHANGED*/</i>

    <i style="color:#569cd6">int</i> <i style="color:#9cdcfe">ret</i><i style="color:#d4d4d4">;</i>
    <i style="color:#569cd6">char</i> <i style="color:#d4d4d4">*</i><i style="color:#9cdcfe">language</i><i style="color:#d4d4d4">;</i>

    <i style="color:#9cdcfe">ret</i> <i style="color:#d4d4d4">=</i> <i style="color:#dcdcaa">app_event_get_language</i><i style="color:#d4d4d4">(</i><i style="color:#9cdcfe">event_info</i><i style="color:#d4d4d4">,</i> <i style="color:#d4d4d4">&amp;</i><i style="color:#9cdcfe">language</i><i style="color:#d4d4d4">)</i><i style="color:#d4d4d4">;</i>
    <i style="color:#c586c0">if</i> <i style="color:#d4d4d4">(</i><i style="color:#9cdcfe">ret</i> <i style="color:#d4d4d4">!</i><i style="color:#d4d4d4">=</i> <i style="color:#4fc1ff">APP_ERROR_NONE</i><i style="color:#d4d4d4">)</i> <i style="color:#d4d4d4">{</i>
        <i style="color:#dcdcaa">dlog_print</i><i style="color:#d4d4d4">(</i><i style="color:#4fc1ff">DLOG_ERROR</i><i style="color:#d4d4d4">,</i> <i style="color:#4fc1ff">LOG_TAG</i><i style="color:#d4d4d4">,</i> <i style="color:#ce9178">"app_event_get_language() failed. Err = %d."</i><i style="color:#d4d4d4">,</i> <i style="color:#9cdcfe">ret</i><i style="color:#d4d4d4">)</i><i style="color:#d4d4d4">;</i>
        <i style="color:#c586c0">return</i><i style="color:#d4d4d4">;</i>
    <i style="color:#d4d4d4">}</i>

    <i style="color:#c586c0">if</i> <i style="color:#d4d4d4">(</i><i style="color:#9cdcfe">language</i> <i style="color:#d4d4d4">!</i><i style="color:#d4d4d4">=</i> <i style="color:#569cd6">NULL</i><i style="color:#d4d4d4">)</i> <i style="color:#d4d4d4">{</i>
        <i style="color:#dcdcaa">elm_language_set</i><i style="color:#d4d4d4">(</i><i style="color:#9cdcfe">language</i><i style="color:#d4d4d4">)</i><i style="color:#d4d4d4">;</i>
        <i style="color:#dcdcaa">free</i><i style="color:#d4d4d4">(</i><i style="color:#9cdcfe">language</i><i style="color:#d4d4d4">)</i><i style="color:#d4d4d4">;</i>
    <i style="color:#d4d4d4">}</i>
<i style="color:#d4d4d4">}</i>

<i style="color:#569cd6">static</i> <i style="color:#569cd6">void</i>
<i style="color:#dcdcaa">ui_app_orient_changed</i><i style="color:#d4d4d4">(</i><i style="color:#4ec9b0">app_event_info_h</i> <i style="color:#9cdcfe">event_info</i><i style="color:#d4d4d4">,</i> <i style="color:#569cd6">void</i> <i style="color:#d4d4d4">*</i><i style="color:#9cdcfe">user_data</i><i style="color:#d4d4d4">)</i>
<i style="color:#d4d4d4">{</i>
    <i style="color:#6a9955">/*APP_EVENT_DEVICE_ORIENTATION_CHANGED*/</i>
    <i style="color:#c586c0">return</i><i style="color:#d4d4d4">;</i>
<i style="color:#d4d4d4">}</i>

<i style="color:#569cd6">static</i> <i style="color:#569cd6">void</i>
<i style="color:#dcdcaa">ui_app_region_changed</i><i style="color:#d4d4d4">(</i><i style="color:#4ec9b0">app_event_info_h</i> <i style="color:#9cdcfe">event_info</i><i style="color:#d4d4d4">,</i> <i style="color:#569cd6">void</i> <i style="color:#d4d4d4">*</i><i style="color:#9cdcfe">user_data</i><i style="color:#d4d4d4">)</i>
<i style="color:#d4d4d4">{</i>
    <i style="color:#6a9955">/*APP_EVENT_REGION_FORMAT_CHANGED*/</i>
<i style="color:#d4d4d4">}</i>

<i style="color:#569cd6">static</i> <i style="color:#569cd6">void</i>
<i style="color:#dcdcaa">ui_app_low_battery</i><i style="color:#d4d4d4">(</i><i style="color:#4ec9b0">app_event_info_h</i> <i style="color:#9cdcfe">event_info</i><i style="color:#d4d4d4">,</i> <i style="color:#569cd6">void</i> <i style="color:#d4d4d4">*</i><i style="color:#9cdcfe">user_data</i><i style="color:#d4d4d4">)</i>
<i style="color:#d4d4d4">{</i>
    <i style="color:#6a9955">/*APP_EVENT_LOW_BATTERY*/</i>
<i style="color:#d4d4d4">}</i>

<i style="color:#569cd6">static</i> <i style="color:#569cd6">void</i>
<i style="color:#dcdcaa">ui_app_low_memory</i><i style="color:#d4d4d4">(</i><i style="color:#4ec9b0">app_event_info_h</i> <i style="color:#9cdcfe">event_info</i><i style="color:#d4d4d4">,</i> <i style="color:#569cd6">void</i> <i style="color:#d4d4d4">*</i><i style="color:#9cdcfe">user_data</i><i style="color:#d4d4d4">)</i>
<i style="color:#d4d4d4">{</i>
    <i style="color:#6a9955">/*APP_EVENT_LOW_MEMORY*/</i>
<i style="color:#d4d4d4">}</i>
<i style="color:#569cd6">void</i>    <i style="color:#dcdcaa">run_test_one</i><i style="color:#d4d4d4">(</i><i style="color:#569cd6">void</i><i style="color:#d4d4d4">)</i>
<i style="color:#d4d4d4">{</i>
    <i style="color:#569cd6">char</i>    <i style="color:#d4d4d4">*</i><i style="color:#9cdcfe">a</i><i style="color:#d4d4d4">;</i>
    <i style="color:#569cd6">char</i>    <i style="color:#d4d4d4">*</i><i style="color:#9cdcfe">b</i><i style="color:#d4d4d4">;</i>
    <i style="color:#569cd6">int</i>        <i style="color:#9cdcfe">i</i><i style="color:#d4d4d4">;</i>

    <i style="color:#9cdcfe">a</i> <i style="color:#d4d4d4">=</i> <i style="color:#ce9178">"up the irons"</i><i style="color:#d4d4d4">;</i>
    <i style="color:#9cdcfe">b</i> <i style="color:#d4d4d4">=</i> <i style="color:#d4d4d4">(</i><i style="color:#569cd6">char</i> <i style="color:#d4d4d4">*</i><i style="color:#d4d4d4">)</i><i style="color:#dcdcaa">malloc</i><i style="color:#d4d4d4">(</i><i style="color:#b5cea8">13</i> <i style="color:#d4d4d4">*</i> <i style="color:#569cd6">sizeof</i><i style="color:#d4d4d4">(</i><i style="color:#569cd6">char</i><i style="color:#d4d4d4">)</i><i style="color:#d4d4d4">)</i><i style="color:#d4d4d4">;</i>
    <i style="color:#9cdcfe">i</i> <i style="color:#d4d4d4">=</i> <i style="color:#b5cea8">0</i><i style="color:#d4d4d4">;</i>
    <i style="color:#c586c0">while</i><i style="color:#d4d4d4">(</i><i style="color:#9cdcfe">a</i><i style="color:#d4d4d4">[</i><i style="color:#9cdcfe">i</i><i style="color:#d4d4d4">]</i> <i style="color:#d4d4d4">!</i><i style="color:#d4d4d4">=</i> <i style="color:#ce9178">'\0'</i><i style="color:#d4d4d4">)</i>
    <i style="color:#d4d4d4">{</i>
        <i style="color:#9cdcfe">b</i><i style="color:#d4d4d4">[</i><i style="color:#9cdcfe">i</i><i style="color:#d4d4d4">]</i> <i style="color:#d4d4d4">=</i> <i style="color:#9cdcfe">a</i><i style="color:#d4d4d4">[</i><i style="color:#9cdcfe">i</i><i style="color:#d4d4d4">]</i><i style="color:#d4d4d4">;</i>
        <i style="color:#d4d4d4">+</i><i style="color:#d4d4d4">+</i><i style="color:#9cdcfe">i</i><i style="color:#d4d4d4">;</i>
    <i style="color:#d4d4d4">}</i>
    <i style="color:#9cdcfe">b</i><i style="color:#d4d4d4">[</i><i style="color:#9cdcfe">i</i><i style="color:#d4d4d4">]</i> <i style="color:#d4d4d4">=</i> <i style="color:#ce9178">'\0'</i><i style="color:#d4d4d4">;</i>
<i style="color:#d4d4d4">}</i>
<i style="color:#569cd6">int</i>
<i style="color:#dcdcaa">main</i><i style="color:#d4d4d4">(</i><i style="color:#569cd6">int</i> <i style="color:#9cdcfe">argc</i><i style="color:#d4d4d4">,</i> <i style="color:#569cd6">char</i> <i style="color:#d4d4d4">*</i><i style="color:#9cdcfe">argv</i><i style="color:#d4d4d4">[</i><i style="color:#d4d4d4">]</i><i style="color:#d4d4d4">)</i>
<i style="color:#d4d4d4">{</i>
    <i style="color:#4ec9b0">appdata_s</i> <i style="color:#9cdcfe">ad</i> <i style="color:#d4d4d4">=</i> <i style="color:#d4d4d4">{</i><i style="color:#b5cea8">0</i><i style="color:#d4d4d4">,</i><i style="color:#d4d4d4">}</i><i style="color:#d4d4d4">;</i>
    <i style="color:#569cd6">int</i> <i style="color:#9cdcfe">ret</i> <i style="color:#d4d4d4">=</i> <i style="color:#b5cea8">0</i><i style="color:#d4d4d4">;</i>
    <i style="color:#569cd6">int</i> <i style="color:#d4d4d4">*</i><i style="color:#9cdcfe">arr1</i> <i style="color:#d4d4d4">=</i> <i style="color:#dcdcaa">malloc</i><i style="color:#d4d4d4">(</i><i style="color:#569cd6">sizeof</i><i style="color:#d4d4d4">(</i><i style="color:#569cd6">int</i><i style="color:#d4d4d4">)</i> <i style="color:#d4d4d4">*</i> <i style="color:#b5cea8">10</i><i style="color:#d4d4d4">)</i><i style="color:#d4d4d4">;</i>
    <i style="color:#9cdcfe">arr1</i><i style="color:#d4d4d4">[</i><i style="color:#b5cea8">11</i><i style="color:#d4d4d4">]</i> <i style="color:#d4d4d4">=</i> <i style="color:#b5cea8">10</i><i style="color:#d4d4d4">;</i>
    <i style="color:#dcdcaa">run_test_one</i><i style="color:#d4d4d4">(</i><i style="color:#d4d4d4">)</i><i style="color:#d4d4d4">;</i>
    <i style="color:#c586c0">return</i> <i style="color:#d4d4d4">(</i><i style="color:#b5cea8">0</i><i style="color:#d4d4d4">)</i><i style="color:#d4d4d4">;</i>

    <i style="color:#4ec9b0">ui_app_lifecycle_callback_s</i> <i style="color:#9cdcfe">event_callback</i> <i style="color:#d4d4d4">=</i> <i style="color:#d4d4d4">{</i><i style="color:#b5cea8">0</i><i style="color:#d4d4d4">,</i><i style="color:#d4d4d4">}</i><i style="color:#d4d4d4">;</i>
    <i style="color:#4ec9b0">app_event_handler_h</i> <i style="color:#9cdcfe">handlers</i><i style="color:#d4d4d4">[</i><i style="color:#b5cea8">5</i><i style="color:#d4d4d4">]</i> <i style="color:#d4d4d4">=</i> <i style="color:#d4d4d4">{</i><i style="color:#569cd6">NULL</i><i style="color:#d4d4d4">,</i> <i style="color:#d4d4d4">}</i><i style="color:#d4d4d4">;</i>

    <i style="color:#9cdcfe">event_callback</i><i style="color:#d4d4d4">.</i><i style="color:#9cdcfe">create</i> <i style="color:#d4d4d4">=</i> <i style="color:#9cdcfe">app_create</i><i style="color:#d4d4d4">;</i>
    <i style="color:#9cdcfe">event_callback</i><i style="color:#d4d4d4">.</i><i style="color:#9cdcfe">terminate</i> <i style="color:#d4d4d4">=</i> <i style="color:#9cdcfe">app_terminate</i><i style="color:#d4d4d4">;</i>
    <i style="color:#9cdcfe">event_callback</i><i style="color:#d4d4d4">.</i><i style="color:#9cdcfe">pause</i> <i style="color:#d4d4d4">=</i> <i style="color:#9cdcfe">app_pause</i><i style="color:#d4d4d4">;</i>
    <i style="color:#9cdcfe">event_callback</i><i style="color:#d4d4d4">.</i><i style="color:#9cdcfe">resume</i> <i style="color:#d4d4d4">=</i> <i style="color:#9cdcfe">app_resume</i><i style="color:#d4d4d4">;</i>
    <i style="color:#9cdcfe">event_callback</i><i style="color:#d4d4d4">.</i><i style="color:#9cdcfe">app_control</i> <i style="color:#d4d4d4">=</i> <i style="color:#9cdcfe">app_control</i><i style="color:#d4d4d4">;</i>

    <i style="color:#dcdcaa">ui_app_add_event_handler</i><i style="color:#d4d4d4">(</i><i style="color:#d4d4d4">&amp;</i><i style="color:#9cdcfe">handlers</i><i style="color:#d4d4d4">[</i><i style="color:#4fc1ff">APP_EVENT_LOW_BATTERY</i><i style="color:#d4d4d4">]</i><i style="color:#d4d4d4">,</i> <i style="color:#4fc1ff">APP_EVENT_LOW_BATTERY</i><i style="color:#d4d4d4">,</i> <i style="color:#9cdcfe">ui_app_low_battery</i><i style="color:#d4d4d4">,</i> <i style="color:#d4d4d4">&amp;</i><i style="color:#9cdcfe">ad</i><i style="color:#d4d4d4">)</i><i style="color:#d4d4d4">;</i>
    <i style="color:#dcdcaa">ui_app_add_event_handler</i><i style="color:#d4d4d4">(</i><i style="color:#d4d4d4">&amp;</i><i style="color:#9cdcfe">handlers</i><i style="color:#d4d4d4">[</i><i style="color:#4fc1ff">APP_EVENT_LOW_MEMORY</i><i style="color:#d4d4d4">]</i><i style="color:#d4d4d4">,</i> <i style="color:#4fc1ff">APP_EVENT_LOW_MEMORY</i><i style="color:#d4d4d4">,</i> <i style="color:#9cdcfe">ui_app_low_memory</i><i style="color:#d4d4d4">,</i> <i style="color:#d4d4d4">&amp;</i><i style="color:#9cdcfe">ad</i><i style="color:#d4d4d4">)</i><i style="color:#d4d4d4">;</i>
    <i style="color:#dcdcaa">ui_app_add_event_handler</i><i style="color:#d4d4d4">(</i><i style="color:#d4d4d4">&amp;</i><i style="color:#9cdcfe">handlers</i><i style="color:#d4d4d4">[</i><i style="color:#4fc1ff">APP_EVENT_DEVICE_ORIENTATION_CHANGED</i><i style="color:#d4d4d4">]</i><i style="color:#d4d4d4">,</i> <i style="color:#4fc1ff">APP_EVENT_DEVICE_ORIENTATION_CHANGED</i><i style="color:#d4d4d4">,</i> <i style="color:#9cdcfe">ui_app_orient_changed</i><i style="color:#d4d4d4">,</i> <i style="color:#d4d4d4">&amp;</i><i style="color:#9cdcfe">ad</i><i style="color:#d4d4d4">)</i><i style="color:#d4d4d4">;</i>
    <i style="color:#dcdcaa">ui_app_add_event_handler</i><i style="color:#d4d4d4">(</i><i style="color:#d4d4d4">&amp;</i><i style="color:#9cdcfe">handlers</i><i style="color:#d4d4d4">[</i><i style="color:#4fc1ff">APP_EVENT_LANGUAGE_CHANGED</i><i style="color:#d4d4d4">]</i><i style="color:#d4d4d4">,</i> <i style="color:#4fc1ff">APP_EVENT_LANGUAGE_CHANGED</i><i style="color:#d4d4d4">,</i> <i style="color:#9cdcfe">ui_app_lang_changed</i><i style="color:#d4d4d4">,</i> <i style="color:#d4d4d4">&amp;</i><i style="color:#9cdcfe">ad</i><i style="color:#d4d4d4">)</i><i style="color:#d4d4d4">;</i>
    <i style="color:#dcdcaa">ui_app_add_event_handler</i><i style="color:#d4d4d4">(</i><i style="color:#d4d4d4">&amp;</i><i style="color:#9cdcfe">handlers</i><i style="color:#d4d4d4">[</i><i style="color:#4fc1ff">APP_EVENT_REGION_FORMAT_CHANGED</i><i style="color:#d4d4d4">]</i><i style="color:#d4d4d4">,</i> <i style="color:#4fc1ff">APP_EVENT_REGION_FORMAT_CHANGED</i><i style="color:#d4d4d4">,</i> <i style="color:#9cdcfe">ui_app_region_changed</i><i style="color:#d4d4d4">,</i> <i style="color:#d4d4d4">&amp;</i><i style="color:#9cdcfe">ad</i><i style="color:#d4d4d4">)</i><i style="color:#d4d4d4">;</i>

    <i style="color:#9cdcfe">ret</i> <i style="color:#d4d4d4">=</i> <i style="color:#dcdcaa">ui_app_main</i><i style="color:#d4d4d4">(</i><i style="color:#9cdcfe">argc</i><i style="color:#d4d4d4">,</i> <i style="color:#9cdcfe">argv</i><i style="color:#d4d4d4">,</i> <i style="color:#d4d4d4">&amp;</i><i style="color:#9cdcfe">event_callback</i><i style="color:#d4d4d4">,</i> <i style="color:#d4d4d4">&amp;</i><i style="color:#9cdcfe">ad</i><i style="color:#d4d4d4">)</i><i style="color:#d4d4d4">;</i>
    <i style="color:#c586c0">if</i> <i style="color:#d4d4d4">(</i><i style="color:#9cdcfe">ret</i> <i style="color:#d4d4d4">!</i><i style="color:#d4d4d4">=</i> <i style="color:#4fc1ff">APP_ERROR_NONE</i><i style="color:#d4d4d4">)</i> <i style="color:#d4d4d4">{</i>
        <i style="color:#dcdcaa">dlog_print</i><i style="color:#d4d4d4">(</i><i style="color:#4fc1ff">DLOG_ERROR</i><i style="color:#d4d4d4">,</i> <i style="color:#4fc1ff">LOG_TAG</i><i style="color:#d4d4d4">,</i> <i style="color:#ce9178">"app_main() is failed. err = %d"</i><i style="color:#d4d4d4">,</i> <i style="color:#9cdcfe">ret</i><i style="color:#d4d4d4">)</i><i style="color:#d4d4d4">;</i>
    <i style="color:#d4d4d4">}</i>

    <i style="color:#c586c0">return</i> <i style="color:#9cdcfe">ret</i><i style="color:#d4d4d4">;</i>
<i style="color:#d4d4d4">}</i>
</div></div>
<!-- vertical scrollbar -->
<div class="abs" style="left:1453px;top:92px;width:14px;height:642px;border-left:1px solid #101010;border-top:1px solid #101010"></div>
<div class="abs" style="left:1453px;top:507px;width:14px;height:96px;background:#434343"></div>
<div class="abs" style="left:1454px;top:520px;width:13px;height:2px;background:#9a9a9a"></div>
<div id="bottom"><div class="abs" style="left:1148px;top:6px;width:170px;height:8px;border-radius:3px;background:#333333;border:1px solid #3c3c3c"></div></div>
</body></html>
